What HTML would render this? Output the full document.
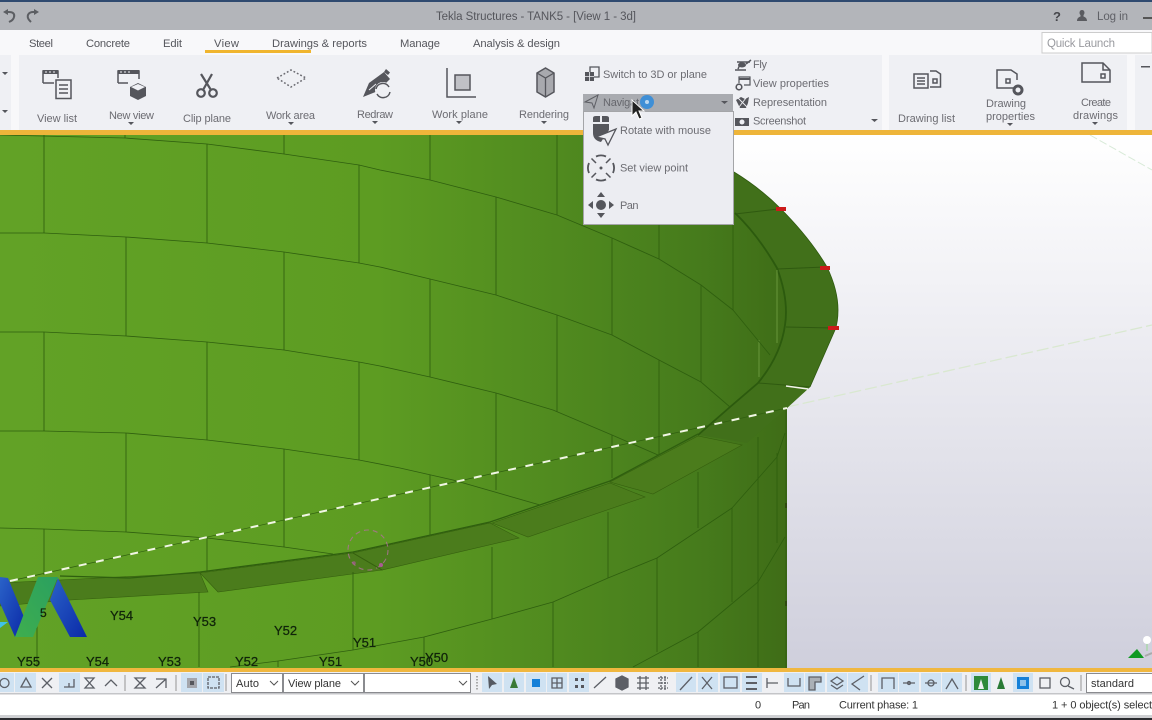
<!DOCTYPE html>
<html><head><meta charset="utf-8"><title>Tekla Structures</title>
<style>
html,body{margin:0;padding:0;background:#fff;width:1152px;height:720px;overflow:hidden}
svg{display:block;position:absolute;left:0;top:0}
text{font-family:"Liberation Sans",sans-serif;font-size:11px;fill:#6c6c72}
.m text,text.m{fill:#55565c;font-size:11.2px}
.y text{fill:#10240a;font-size:13px;stroke:#10240a;stroke-width:.25}
.ic{fill:none;stroke:#55565c;stroke-width:1.5}
.t{fill:none;stroke:#5c5f66;stroke-width:1.3}
.l{fill:none;stroke:#2f5f0f;stroke-width:.85;stroke-linejoin:round}
</style></head><body>
<svg width="1152" height="720" viewBox="0 0 1152 720" xmlns="http://www.w3.org/2000/svg">
<defs>
<linearGradient id="bg" x1="0" y1="0" x2="0" y2="1"><stop offset="0" stop-color="#ffffff"/><stop offset=".35" stop-color="#eeeef3"/><stop offset="1" stop-color="#cfcfdc"/></linearGradient>
<linearGradient id="wall" gradientUnits="userSpaceOnUse" x1="0" y1="0" x2="786" y2="0"><stop offset="0" stop-color="#62a226"/><stop offset=".48" stop-color="#5d9c22"/><stop offset=".71" stop-color="#508a1f"/><stop offset=".89" stop-color="#467b1c"/><stop offset="1" stop-color="#3f6d17"/></linearGradient>
<linearGradient id="b1" x1="0" y1="0" x2="1" y2="1"><stop offset="0" stop-color="#2a62c8"/><stop offset="1" stop-color="#0b2aa8"/></linearGradient>
<linearGradient id="g1" x1="1" y1="0" x2="0" y2="1"><stop offset="0" stop-color="#2aa060"/><stop offset="1" stop-color="#3fae4e"/></linearGradient>
</defs>

<!-- viewport -->
<rect x="0" y="135" width="1152" height="533" fill="url(#bg)"/>
<path d="M1090 135L1152 170" stroke="#d8ead8" stroke-width="1" stroke-dasharray="8 3" fill="none"/>
<path d="M787 407L1152 325" stroke="#d9e8d0" stroke-width="1.300" stroke-dasharray="12 4" fill="none"/>

<!-- tank body -->
<path d="M0 135H700L734 172Q760 188 780 208Q810 238 827 267Q838 290 838 310Q838 322 835 330L810 387L787 408V668H0Z" fill="url(#wall)"/>
<!-- rim band -->
<path d="M734 172Q760 188 780 208Q810 238 827 267Q838 290 838 310Q838 322 835 330L810 387L787 408L747 443L698 435L730 407L758 383Q777 360 784 335Q789 310 777 268Q758 235 735 213Z" fill="#41701a"/>
<path d="M734 172Q760 188 780 208Q810 238 827 267Q838 290 838 310Q838 322 835 330L810 387" fill="none" stroke="#2f5a10" stroke-width=".8"/>
<path d="M735 213Q758 235 777 268Q789 300 785 325Q781 355 758 383L730 407L698 435" fill="none" stroke="#2c5a0e" stroke-width="1.800"/>
<path d="M735 214L778 209M777 269L825 267M786 327L833 328M758 383L810 387" stroke="#2f5a10" stroke-width="1" fill="none"/>
<path d="M777 270V343M759 340V377" stroke="#7aa84a" stroke-width=".7" fill="none"/>
<path d="M786 386L808 389" stroke="#f2f4ea" stroke-width="1.600" fill="none"/>

<!-- interior courses -->
<g class="l">
<path d="M0 135L125 138L207 144L284 154L359 165L380 170L430 180L496 197L557 215L612 238L659 259L701 285L733 310L770 355"/>
<path d="M0 233L44 233L126 237L207 243L284 252L359 263L380 267L430 279L496 295L557 315L612 335L659 360L701 382L730 407"/>
<path d="M0 332L44 332L126 336L207 342L284 350L359 362L380 366L430 377L496 393L553 410L612 435L658 455"/>
<path d="M0 431L44 431L126 433L207 440L284 449L359 460L400 468L453 480L540 505"/>
<path d="M0 528L44 529L126 532L207 538L284 547L333 554"/>
<path d="M44 135V233M125 135V138M207 144V243M284 135V154M359 165V263M430 135V180M496 197V295M557 135V215M612 238V335M659 224V259M701 285V382M733 224V310"/>
<path d="M126 237V336M284 252V350M430 279V377M557 315V412M659 360V455"/>
<path d="M44 332V431M207 342V440M359 362V460M496 393V490M612 435V478"/>
<path d="M126 433V532M284 449V547M430 475V535"/>
<path d="M44 529V575M207 538V572"/>
</g>

<!-- ledge segments -->
<g fill="#4b7c1c" stroke="#36600f" stroke-width=".6">
<path d="M0 583L200 573L208 592L70 600L0 606Z"/>
<path d="M200 573L353 553L382 570L218 592Z"/>
<path d="M353 553L490 523L519 538L382 570Z"/>
<path d="M492 523L610 483L645 497L528 537Z"/>
<path d="M610 482L698 436L742 445L653 494Z"/>
</g>
<path d="M60 576L130 578L200 572L353 552L490 522L610 481L698 434" fill="none" stroke="#2f5f0f" stroke-width="1.300"/>

<!-- lower wall -->
<g class="l">
<path d="M230 667L278 661L353 650L424 637L492 619L553 602L608 578L657 558L732 508L777 457L785 433"/>
<path d="M633 667L698 632L758 582L785 537"/>
<path d="M37 600V667M199 592V667M278 661V667M353 572V650M424 637V667M492 547V619M553 602V667M608 512V578M657 558V652M698 472V528M698 632V667M732 508V602M758 437V667M777 453V543"/>
</g>
<path d="M786 408V668" stroke="#2f5a10" stroke-width=".8" fill="none"/>
<path d="M786 503V508M786 601V606" stroke="#2f4a10" stroke-width="2" fill="none"/>

<!-- dashed line -->
<path d="M10 581L787 408" stroke="#2f5f0f" stroke-width=".7" fill="none"/>
<path d="M10 581L787 408" stroke="#f1f6e4" stroke-width="2" stroke-dasharray="8 9.600" fill="none"/>

<!-- pink marker -->
<g fill="none" stroke="#b0709a" stroke-width="1.100" opacity=".8"><circle cx="368" cy="550" r="20" stroke-dasharray="5 4"/></g>
<path d="M353 553L382 570" stroke="#36600f" stroke-width="1" fill="none"/>
<circle cx="381" cy="565" r="2" fill="#a95a94"/><circle cx="354" cy="563" r="1.800" fill="#a95a94" opacity=".7"/>
<!-- red marks -->
<g fill="#cc1a1a"><rect x="776" y="207" width="10" height="4"/><rect x="820" y="266" width="10" height="4"/><rect x="828" y="326" width="11" height="4"/></g>

<!-- logo -->
<path d="M0 577L8 578L24 617L15 637L0 603Z" fill="url(#b1)"/>
<path d="M58 578L87 637H70L50 600Z" fill="url(#b1)"/>
<path d="M38 577H58L33 637H15Z" fill="url(#g1)"/>
<path d="M0 622H8L0 628Z" fill="#3fc3e8"/>

<!-- labels -->
<g class="y">
<text x="40" y="617" style="font-size:12px">5</text>
<text x="110" y="620">Y54</text><text x="193" y="626">Y53</text><text x="274" y="635">Y52</text><text x="353" y="647">Y51</text>
<text x="17" y="666">Y55</text><text x="86" y="666">Y54</text><text x="158" y="666">Y53</text><text x="235" y="666">Y52</text><text x="319" y="666">Y51</text><text x="410" y="666">Y50</text><text x="425" y="662">Y50</text>
</g>

<!-- compass -->
<path d="M1128 658L1137 649L1144 658Z" fill="#0f9a22"/><path d="M1145 656L1152 653" stroke="#aaa" stroke-width="2"/>
<path d="M1147 651V642" stroke="#a8d8a8" stroke-width="1.400"/><circle cx="1147" cy="640" r="4" fill="#fff"/>

<!-- title bar -->
<rect x="0" y="2" width="1152" height="28" fill="#b3b5ba"/>
<rect x="0" y="0" width="1152" height="2" fill="#2f4a70"/>
<path d="M6 12H9C13 12 15 14 14 17C13.500 20 11 21 9 22" fill="none" stroke="#5c5e63" stroke-width="2"/><path d="M3 12L8 9V15Z" fill="#5c5e63"/>
<path d="M36 12H33C29 12 27 15 28 18C28.500 20 30 21 31 22" fill="none" stroke="#5c5e63" stroke-width="2"/><path d="M39 12L34 9V15Z" fill="#5c5e63"/>
<text x="436" y="20" textLength="200" style="fill:#55565c;font-size:11.500px">Tekla Structures - TANK5  -  [View 1 - 3d]</text>
<text x="1053" y="21" style="font-size:13px;font-weight:bold;fill:#46474c">?</text>
<path d="M1077 21H1087C1087 18 1085 17 1083.500 16.500V15C1085 14 1085 10 1082 10C1079 10 1079 14 1080.500 15V16.500C1079 17 1077 18 1077 21Z" fill="#5a5b60"/>
<text x="1097" y="20" textLength="31" style="font-size:11.500px;fill:#606167">Log in</text>
<rect x="1143" y="17" width="9" height="2" fill="#555"/>

<!-- menu row -->
<rect x="0" y="30" width="1152" height="25" fill="#f8f8fa"/>
<g class="m">
<text x="29" y="47" textLength="24">Steel</text>
<text x="86" y="47" textLength="44">Concrete</text>
<text x="163" y="47" textLength="19">Edit</text>
<text x="214" y="47" textLength="25">View</text>
<text x="272" y="47" textLength="95">Drawings &amp; reports</text>
<text x="400" y="47" textLength="40">Manage</text>
<text x="473" y="47" textLength="87">Analysis &amp; design</text>
</g>
<rect x="205" y="50" width="106" height="3" fill="#f0b52e"/>
<rect x="1042" y="32.500" width="110" height="20.500" fill="#fff" stroke="#ccc"/>
<text x="1047" y="47" textLength="68" style="fill:#9a9ba0;font-size:11.500px">Quick Launch</text>

<!-- ribbon -->
<rect x="0" y="55" width="1152" height="75" fill="#eff0f4"/>
<rect x="11" y="55" width="8" height="75" fill="#f8f8fa"/>
<rect x="882" y="55" width="7" height="75" fill="#f8f8fa"/>
<rect x="1127" y="55" width="8" height="75" fill="#f8f8fa"/>
<path d="M2 72H8L5 75ZM2 110H8L5 113ZM1141 66H1150V67.500H1141Z" fill="#55565c"/>

<!-- View list -->
<g class="ic"><path d="M43 83V71H58V78"/><path d="M43 83H54"/><rect x="56" y="80" width="15" height="18.500"/><path d="M59 85H68M59 89H68M59 93H68"/></g>
<rect x="43" y="70" width="15" height="4" fill="#55565c"/><path d="M45 72H47M49 72H51M53 72H55" stroke="#eff0f4" stroke-width="1"/>
<!-- New view -->
<g class="ic"><path d="M118 83V71H139V79"/><path d="M118 83H128"/></g>
<rect x="118" y="70" width="21" height="4" fill="#55565c"/><path d="M120 72H122M124 72H126M128 72H130" stroke="#eff0f4" stroke-width="1"/>
<path d="M130 87L138 83L146 87V96L138 100L130 96Z" fill="#55565c"/><path d="M131 87L138 90.500L145 87L138 84Z" fill="#eff0f4"/>
<!-- Clip plane -->
<g class="ic" style="stroke-width:2.200"><circle cx="201" cy="93" r="3.800"/><circle cx="213" cy="93" r="3.800"/><path d="M203 90L212 74M211 90L201 74"/></g>
<!-- Work area -->
<path d="M277 78L291 70L306 78L291 87Z" fill="none" stroke="#6a6a70" stroke-width="1.500" stroke-dasharray="1.800 2"/>
<!-- Redraw -->
<path d="M363 97L369 83L384 72L390 79L378 91Z" fill="#55565c"/><path d="M386 69L390 72.500L388 75L384 72Z" fill="#55565c"/>
<path d="M369 90L376 84" stroke="#eff0f4" stroke-width="1"/>
<circle cx="383" cy="90" r="8" fill="#eff0f4"/>
<g class="ic"><path d="M376 89A7 7 0 0 1 389 87M390 92A7 7 0 0 1 377 94"/></g>
<!-- Work plane -->
<g class="ic"><path d="M447 68V97H476"/><rect x="455" y="75" width="15" height="15" fill="#c0c1c6"/></g>
<!-- Rendering -->
<path d="M537 73L545.500 68L554 73V92L545.500 97L537 92Z" fill="#a8a9ae" stroke="#55565c" stroke-width="1.500"/><path d="M537 73L545.500 78L554 73M545.500 78V97" fill="none" stroke="#55565c" stroke-width="1.300"/>

<!-- ribbon labels -->
<text x="37" y="122" textLength="40">View list</text>
<text x="109" y="119" textLength="45">New view</text>
<text x="183" y="122" textLength="48">Clip plane</text>
<text x="266" y="119" textLength="49">Work area</text>
<text x="357" y="118" textLength="36">Redraw</text>
<text x="432" y="118" textLength="56">Work plane</text>
<text x="519" y="118" textLength="50">Rendering</text>
<path d="M128 122H134L131 125ZM288 122H294L291 125ZM372 121H378L375 124ZM456 121H462L459 124ZM541 121H547L544 124Z" fill="#55565c"/>

<!-- middle group -->
<g class="ic" style="stroke-width:1.300"><path d="M590 72V67H599V77H594"/></g><rect x="585" y="72" width="9" height="9" fill="#55565c"/><path d="M585 76.500H594M589.500 72V81" stroke="#eff0f4" stroke-width=".8"/>
<text x="603" y="78" textLength="104">Switch to 3D or plane</text>

<text x="753" y="68" textLength="14">Fly</text>
<text x="753" y="87" textLength="76">View properties</text>
<text x="753" y="106" textLength="74">Representation</text>
<text x="753" y="124.500" textLength="53">Screenshot</text>
<path d="M735 70H746M737 62H750M741 62L738 69M746 64L751 60" stroke="#55565c" stroke-width="1.500" fill="none"/><ellipse cx="742" cy="65" rx="4" ry="2.500" fill="#55565c"/>
<g class="ic" style="stroke-width:1.200"><path d="M739 83V77H750V85H744"/></g><path d="M739 79H750" stroke="#55565c" stroke-width="2"/><circle cx="739" cy="87" r="2.800" fill="none" stroke="#55565c" stroke-width="1.600"/>
<path d="M736 100L741 97L745 99L749 97L748 103L746 108H740Z" fill="#55565c"/><path d="M738 98L747 107M746 98L739 107" stroke="#eff0f4" stroke-width=".9"/>
<rect x="735" y="118" width="14" height="8" fill="#55565c"/><circle cx="742" cy="122" r="2.500" fill="#eff0f4"/>
<path d="M871 119H878L874.500 122Z" fill="#55565c"/>

<!-- drawing group -->
<g class="ic"><rect x="914" y="74" width="14" height="14"/><path d="M917 78H925M917 81H925M917 84H925"/><path d="M930 71H936L940.500 74V87H930"/><rect x="933" y="79" width="4" height="4"/></g>
<text x="898" y="122" textLength="57">Drawing list</text>
<g class="ic"><path d="M1015 88H997V70H1011L1017 74V80"/><rect x="1006" y="79" width="4" height="4"/></g>
<circle cx="1018" cy="90" r="4" fill="none" stroke="#55565c" stroke-width="3"/>
<text x="986" y="107" textLength="40">Drawing</text><text x="986" y="120" textLength="49">properties</text>
<path d="M1007 123H1013L1010 126Z" fill="#55565c"/>
<g class="ic"><path d="M1082 63H1103L1110 70V82H1082Z"/><path d="M1103 63V70H1110"/><rect x="1101" y="74" width="4" height="4"/></g>
<text x="1081" y="106" textLength="30">Create</text><text x="1073" y="119" textLength="45">drawings</text>
<path d="M1092 122H1098L1095 125Z" fill="#55565c"/>

<!-- orange bars -->
<rect x="0" y="130" width="1152" height="5" fill="#eeb53a"/>
<rect x="0" y="668" width="1152" height="4" fill="#f0b73f"/>

<!-- navigate + dropdown -->
<rect x="583" y="94" width="150" height="17" fill="#a9abb0"/>
<path d="M585 102L598 95L594 108L592 103Z" fill="none" stroke="#5d5e64" stroke-width="1"/>
<text x="603" y="106" textLength="36" style="fill:#66676d">Navigat</text>
<path d="M721 101H728L724.500 104Z" fill="#55565c"/>
<rect x="583.500" y="111.500" width="150" height="113" fill="#ecedf2" stroke="#a4a5a8"/>
<path d="M593 118Q593 116 596 116H600V122H593ZM602 116H606Q609 116 609 118V122H602Z" fill="#55565c"/>
<path d="M593 124H609V130L601 142C596 141 593 138 593 133Z" fill="#55565c"/>
<path d="M596 137L616 129L608 145L605 139Z" fill="#ecedf2" stroke="#55565c" stroke-width="1.300"/>
<text x="620" y="134" textLength="91">Rotate with mouse</text>
<path d="M589 163A12.500 12.500 0 0 0 589 173M613 163A12.500 12.500 0 0 1 613 173M596 156.500A12.500 12.500 0 0 1 606 156.500M596 179.500A12.500 12.500 0 0 0 606 179.500" stroke="#55565c" stroke-width="1.800" fill="none"/>
<path d="M591.500 158.500L596 163M610.500 158.500L606 163M591.500 177.500L596 173M610.500 177.500L606 173" stroke="#55565c" stroke-width="1.500" fill="none"/>
<circle cx="601" cy="168" r="1.500" fill="#55565c"/>
<text x="620" y="171.500" textLength="68">Set view point</text>
<circle cx="601" cy="205" r="5" fill="#55565c"/>
<path d="M597 197H605L601 192ZM597 213H605L601 218ZM593 201V209L588 205ZM609 201V209L614 205Z" fill="#55565c"/>
<text x="620" y="209" textLength="18.500">Pan</text>

<!-- cursor -->
<circle cx="647" cy="102" r="7" fill="#3f8fd6"/><circle cx="647" cy="102" r="2" fill="#b9d6ef"/>
<path d="M632 100V116L636 112L639 119L642 118L639 111L644 111Z" fill="#222" stroke="#fff" stroke-width="1"/>

<!-- toolbar -->
<rect x="0" y="672" width="1152" height="21" fill="#eff0f3"/>
<rect x="0" y="693" width="1152" height="1.500" fill="#c4c5c8"/>
<g fill="#cfe2f2">
<rect x="0" y="673" width="14" height="19"/><rect x="15" y="673" width="21" height="19"/><rect x="59" y="673" width="21" height="19"/>
<rect x="181" y="673" width="21" height="19"/><rect x="203" y="673" width="21" height="19"/>
<rect x="482" y="673" width="20" height="19"/><rect x="504" y="673" width="20" height="19"/><rect x="526" y="673" width="20" height="19"/><rect x="547" y="673" width="20" height="19"/><rect x="569" y="673" width="20" height="19"/>
<rect x="676" y="673" width="20" height="19"/><rect x="698" y="673" width="20" height="19"/><rect x="720" y="673" width="20" height="19"/><rect x="742" y="673" width="20" height="19"/>
<rect x="784" y="673" width="20" height="19"/><rect x="805" y="673" width="20" height="19"/><rect x="827" y="673" width="20" height="19"/><rect x="848" y="673" width="20" height="19"/>
<rect x="878" y="673" width="20" height="19"/><rect x="899" y="673" width="20" height="19"/><rect x="921" y="673" width="20" height="19"/><rect x="942" y="673" width="20" height="19"/>
<rect x="971" y="673" width="20" height="19"/><rect x="1013" y="673" width="20" height="19"/>
</g>
<g class="t">
<circle cx="4.500" cy="683" r="4.500"/><path d="M21 687L26 678L31 687Z"/><path d="M42 678L52 688M52 678L42 688"/>
<path d="M64 687H74V679M69 687V683"/><path d="M85 678H94L85 688H94Z"/><path d="M105 686L111 680L117 686"/>
<path d="M135 678H145L135 688H145Z"/><path d="M156 679H166V688M166 679L156 688"/>
<path d="M125 675V691M176 675V691M226 674V691" stroke="#aaa"/>
<rect x="208" y="677" width="11" height="11" stroke-dasharray="3 1"/>
</g>
<rect x="187" y="678" width="10" height="10" fill="#a4a6ac"/><rect x="190" y="681" width="4" height="4" fill="#55565c"/>

<!-- combos -->
<g fill="#fff" stroke="#8a8b8f"><rect x="231.500" y="673.500" width="51" height="19"/><rect x="283.500" y="673.500" width="80" height="19"/><rect x="364.500" y="673.500" width="106" height="19"/></g>
<text x="236" y="687" textLength="23" style="fill:#333">Auto</text>
<text x="288" y="687" textLength="53" style="fill:#333">View plane</text>
<path d="M270 681L274 685L278 681M351 681L355 685L359 681M459 681L463 685L467 681" fill="none" stroke="#555"/>
<path d="M477 676V690" stroke="#aaa" stroke-dasharray="1.500 1.500" stroke-width="2"/>

<path d="M488 676L497 684L492 685L489 689Z" fill="#555a62"/>
<path d="M510 688L514 677L518 688Z" fill="#3a7a35"/>
<rect x="532" y="679" width="8" height="8" fill="#1580d8"/>
<g class="t">
<path d="M552 678H562V688H552ZM552 683H562M557 678V688"/>
<path d="M594 688L606 677"/><path d="M616 679L622 676L628 679V687L622 690L616 687Z" fill="#5c5f66"/>
<path d="M637 678H649M637 683H649M637 688H649M640 676V690M646 676V690"/><path d="M658 678H668M658 683H668M658 688H668M661 676V690M665 676V690" stroke-dasharray="2 1"/>
<path d="M680 690L692 677"/><path d="M702 677L712 689M712 677L702 689"/><rect x="724" y="677" width="13" height="11"/>
<path d="M746 677H757M746 683H757M746 689H757" stroke-width="2"/><path d="M767 678V688M767 683H778"/>
<path d="M788 678V686H800V678"/><path d="M809 677H821V682H815V690H809Z" fill="#aab0b6"/><path d="M831 681L837 677L843 681L837 685ZM831 685L837 689L843 685"/>
<path d="M864 676L852 684L860 690"/><path d="M871 675V691M966 675V691M1081 675V691" stroke="#aaa"/>
<path d="M882 689V678H894V689"/><path d="M903 683H915M925 683H937"/><circle cx="909" cy="683" r="1.500"/><circle cx="931" cy="683" r="3"/>
<path d="M946 689L952 679L958 689"/>
<rect x="1040" y="678" width="10" height="10"/>
<circle cx="1065" cy="682" r="4.500"/><path d="M1068 686L1074 689"/>
</g>
<g fill="#55565c"><rect x="575" y="678" width="3" height="3"/><rect x="581" y="678" width="3" height="3"/><rect x="575" y="685" width="3" height="3"/><rect x="581" y="685" width="3" height="3"/></g>
<rect x="974" y="676" width="14" height="14" fill="#2e8a3a"/><path d="M978 689L981 679L984 689Z" fill="#eff0f3"/>
<path d="M997 689L1001 677L1005 689Z" fill="#2a7a35"/>
<rect x="1017" y="677" width="12" height="12" fill="#1580d8"/><rect x="1020" y="680" width="6" height="6" fill="#8fc2ea"/>
<rect x="1086.500" y="673.500" width="70" height="19" fill="#fff" stroke="#8a8b8f"/>
<text x="1091" y="687" textLength="43" style="fill:#333">standard</text>

<!-- status bar -->
<rect x="0" y="694.500" width="1152" height="20.500" fill="#fff"/>
<rect x="0" y="715" width="1152" height="3" fill="#cfd0d3"/>
<rect x="0" y="718" width="1152" height="2" fill="#2b2c30"/>
<text x="755" y="708.500" style="fill:#333">0</text>
<text x="792" y="708.500" textLength="18" style="fill:#333">Pan</text>
<text x="839" y="708.500" textLength="79" style="fill:#333">Current phase: 1</text>
<text x="1052" y="708.500" textLength="100" style="fill:#333">1 + 0 object(s) select</text>
</svg>
</body></html>
